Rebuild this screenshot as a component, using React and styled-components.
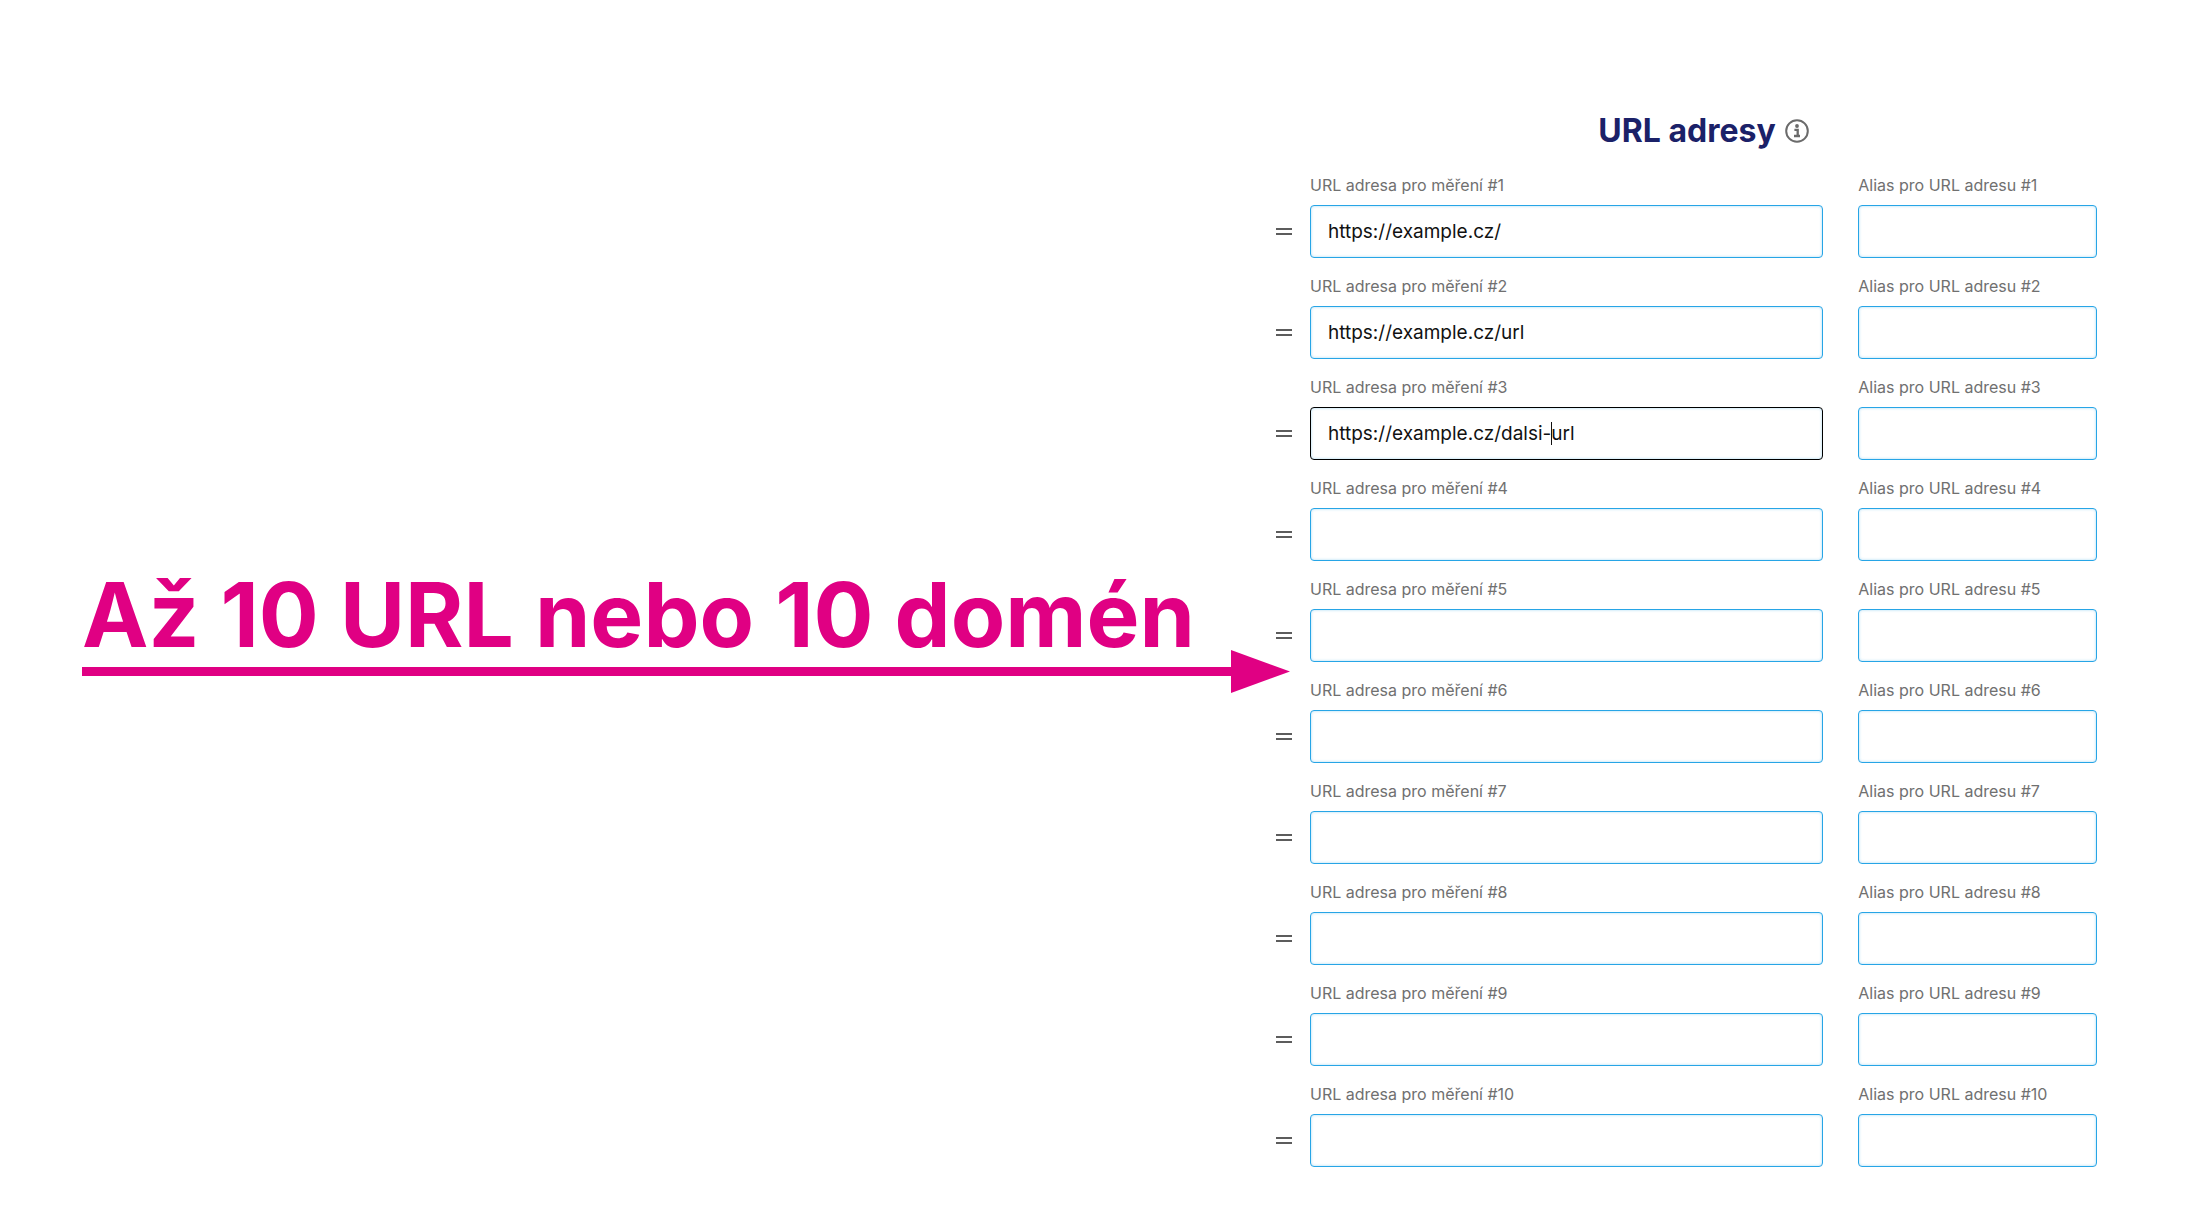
import React, { useState } from 'react';
import styled, { createGlobalStyle } from 'styled-components';

const GlobalStyle = createGlobalStyle`
  * {
    box-sizing: border-box;
  }

  body {
    margin: 0;
    background-color: #ffffff;
    font-family: Inter, 'Liberation Sans', sans-serif;
  }
`;

const Page = styled.main`
  display: grid;
  grid-template-columns: minmax(0, 1194fr) minmax(0, 821fr);
  align-items: center;
  padding: 108px 89px 56px 82px;
`;

const Callout = styled.section`
  display: flex;
  flex-direction: column;
  gap: 3px;
  margin-right: -14px;
  color: #e00083;
`;

const Headline = styled.h1`
  margin: 0;
  font-size: 89px;
  font-weight: 700;
  line-height: 64px;
  white-space: nowrap;
`;

const Arrow = styled.div`
  display: flex;
  align-items: center;
`;

const ArrowLine = styled.div`
  flex: 1;
  height: 9px;
  background-color: currentColor;
`;

const ArrowHead = styled.svg`
  display: block;
  width: 59px;
  height: 43px;
  fill: currentColor;
`;

const Form = styled.form`
  display: flex;
  flex-direction: column;
  gap: 16px;
`;

const FormHeader = styled.header`
  display: flex;
  align-items: center;
  justify-content: center;
  gap: 9px;
  height: 46px;
  margin: 0 0 3px 34px;
`;

const Title = styled.h2`
  margin: 0;
  color: #1b2168;
  font-size: 32px;
  font-weight: 700;
  line-height: 46px;
`;

const InfoButton = styled.button`
  display: flex;
  padding: 0;
  border: none;
  background: none;
  color: #6b6b6b;
`;

const Row = styled.div`
  display: grid;
  grid-template-columns: 16px minmax(0, 532fr) minmax(0, 274fr);
  align-items: end;
`;

const Handle = styled.button`
  display: flex;
  align-items: center;
  height: 53px;
  padding: 0;
  border: none;
  background: none;
  color: #5c5c5c;
  cursor: grab;
`;

const Field = styled.div`
  display: flex;
  flex-direction: column;
  gap: 8px;
  margin-left: ${({ $gap }) => $gap};
`;

const Label = styled.label`
  color: #707070;
  font-size: 16px;
  line-height: 24px;
`;

const InputWrap = styled.div`
  position: relative;
  display: flex;
`;

const Input = styled.input`
  width: 100%;
  height: 53px;
  padding: 0 17px;
  border: 1px solid ${({ $active }) => ($active ? '#000000' : '#27a5e6')};
  border-radius: 4px;
  outline: none;
  background-color: #ffffff;
  box-shadow: inset 0 0 3px rgba(39, 165, 230, 0.4);
  color: #111111;
  font-family: inherit;
  font-size: 19px;
`;

const Caret = styled.span`
  position: absolute;
  top: 15px;
  left: 18px;
  height: 23px;
  border-right: 1px solid #111111;
  color: transparent;
  font-size: 19px;
  line-height: 23px;
  pointer-events: none;

  &::before {
    content: '${({ $text }) => $text}';
  }
`;

const urls = [
  'https://example.cz/',
  'https://example.cz/url',
  'https://example.cz/dalsi-url',
  '', '', '', '', '', '', ''
];

const ACTIVE_ROW = 2;

const InfoIcon = () => (
  <svg width="24" height="24" viewBox="0 0 24 24" fill="none" aria-hidden="true">
    <circle cx="12" cy="12" r="10.8" stroke="currentColor" strokeWidth="2" />
    <circle cx="12" cy="7" r="1.9" fill="currentColor" />
    <path d="M9.4 10.8h3.3v6M9 17h6" stroke="currentColor" strokeWidth="2.3" />
  </svg>
);

const HandleIcon = () => (
  <svg width="16" height="9" viewBox="0 0 16 9" aria-hidden="true">
    <path d="M0 2h16M0 7h16" stroke="currentColor" strokeWidth="2" />
  </svg>
);

const UrlRow = ({ number, url, active, onChange }) => (
  <Row>
    <Handle type="button" aria-label={`Přesunout #${number}`}>
      <HandleIcon />
    </Handle>
    <Field $gap="18px">
      <Label htmlFor={`url-${number}`}>URL adresa pro měření #{number}</Label>
      <InputWrap>
        <Input
          id={`url-${number}`}
          type="text"
          value={url}
          onChange={onChange}
          $active={active}
        />
        {active && <Caret $text="https://example.cz/dalsi-" />}
      </InputWrap>
    </Field>
    <Field $gap="35px">
      <Label htmlFor={`alias-${number}`}>Alias pro URL adresu #{number}</Label>
      <InputWrap>
        <Input id={`alias-${number}`} type="text" />
      </InputWrap>
    </Field>
  </Row>
);

const App = () => {
  const [values, setValues] = useState(urls);

  const handleChange = (index, value) => {
    setValues(values.map((item, i) => (i === index ? value : item)));
  };

  return (
    <>
      <GlobalStyle />
      <Page>
        <Callout>
          <Headline>Až 10 URL nebo 10 domén</Headline>
          <Arrow>
            <ArrowLine />
            <ArrowHead viewBox="0 0 59 43" aria-hidden="true">
              <path d="M0 0L59 21.5L0 43Z" />
            </ArrowHead>
          </Arrow>
        </Callout>
        <Form>
          <FormHeader>
            <Title>URL adresy</Title>
            <InfoButton type="button" aria-label="Info">
              <InfoIcon />
            </InfoButton>
          </FormHeader>
          {values.map((url, index) => (
            <UrlRow
              key={index}
              number={index + 1}
              url={url}
              active={index === ACTIVE_ROW}
              onChange={(e) => handleChange(index, e.target.value)}
            />
          ))}
        </Form>
      </Page>
    </>
  );
};

export default App;
